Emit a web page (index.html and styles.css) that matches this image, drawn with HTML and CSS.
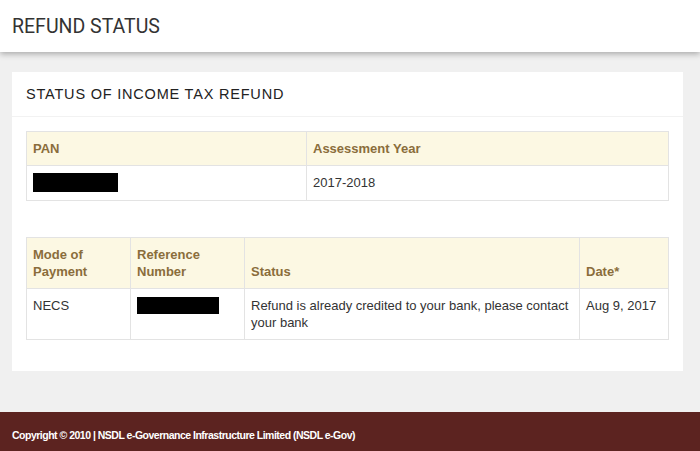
FILE: index.html
```html
<!DOCTYPE html>
<html lang="en">
<head>
    <meta charset="UTF-8">
    <title>Refund Status</title>
    <link rel="stylesheet" href="styles.css">
</head>
<body>

<header class="top-bar">
    <h1>REFUND STATUS</h1>
</header>

<div class="panel">
    <div class="panel-heading">STATUS OF INCOME TAX REFUND</div>
    <div class="panel-body">
        <table class="grid">
            <tr>
                <th class="w-pan">PAN</th>
                <th>Assessment Year</th>
            </tr>
            <tr>
                <td><span class="redact redact-pan"></span></td>
                <td>2017-2018</td>
            </tr>
        </table>

        <table class="grid grid-second">
            <tr>
                <th class="w-mode">Mode of<br>Payment</th>
                <th class="w-ref">Reference<br>Number</th>
                <th class="w-status">Status</th>
                <th>Date*</th>
            </tr>
            <tr>
                <td>NECS</td>
                <td><span class="redact redact-ref"></span></td>
                <td>Refund is already credited to your bank, please contact your bank</td>
                <td>Aug 9, 2017</td>
            </tr>
        </table>
    </div>
</div>

<footer class="bottom-bar">
    <p>Copyright &copy; 2010 | NSDL e-Governance Infrastructure Limited (NSDL e-Gov)</p>
</footer>

</body>
</html>
```

FILE: styles.css
```css
body {
    margin: 0;
    padding: 0;
    background-color: #f0f0f0;
    font-family: "Liberation Sans", Arial, sans-serif;
    color: #333;
}
.top-bar {
    background-color: #fff;
    height: 52px;
    box-shadow: 0 2px 6px rgba(0, 0, 0, 0.3);
    display: flex;
    align-items: center;
    padding: 0 12px;
}
.top-bar h1 {
    margin: 0;
    font-family: Roboto, "Liberation Sans", sans-serif;
    font-weight: 400;
    font-size: 19.5px;
    color: #333;
}
.panel {
    background-color: #fff;
    margin: 20px 17px 0 12px;
}
.panel-heading {
    padding: 14px 14px 13px;
    font-size: 14.5px;
    line-height: 17px;
    letter-spacing: 0.8px;
    color: #222;
    border-bottom: 1px solid #f2f2f2;
}
.panel-body {
    padding: 14px 14px 31px;
}
.grid {
    width: 100%;
    border-collapse: collapse;
    font-size: 13px;
    line-height: 17px;
}
.grid-second {
    margin-top: 36px;
}
.grid th,
.grid td {
    border: 1px solid #e3e3e3;
    padding: 8px 6px;
    text-align: left;
}
.grid td {
    vertical-align: top;
    color: #333;
}
.grid th {
    background-color: #fcf8e3;
    color: #8a6d3b;
    font-weight: bold;
    vertical-align: bottom;
}
.w-pan { width: 267px; }
.w-mode { width: 91px; }
.w-ref { width: 101px; }
.w-status { width: 322px; }
.redact {
    display: block;
    background-color: #000;
}
.redact-pan {
    width: 85px;
    height: 19px;
    margin-top: -1px;
}
.redact-ref {
    width: 82px;
    height: 17px;
    margin-top: 0;
}
.bottom-bar {
    background-color: #5c2320;
    margin-top: 41px;
    padding: 17px 12px 12px;
}
.bottom-bar p {
    margin: 0;
    color: #fff;
    font-size: 10.5px;
    font-weight: bold;
    letter-spacing: -0.5px;
}
```
